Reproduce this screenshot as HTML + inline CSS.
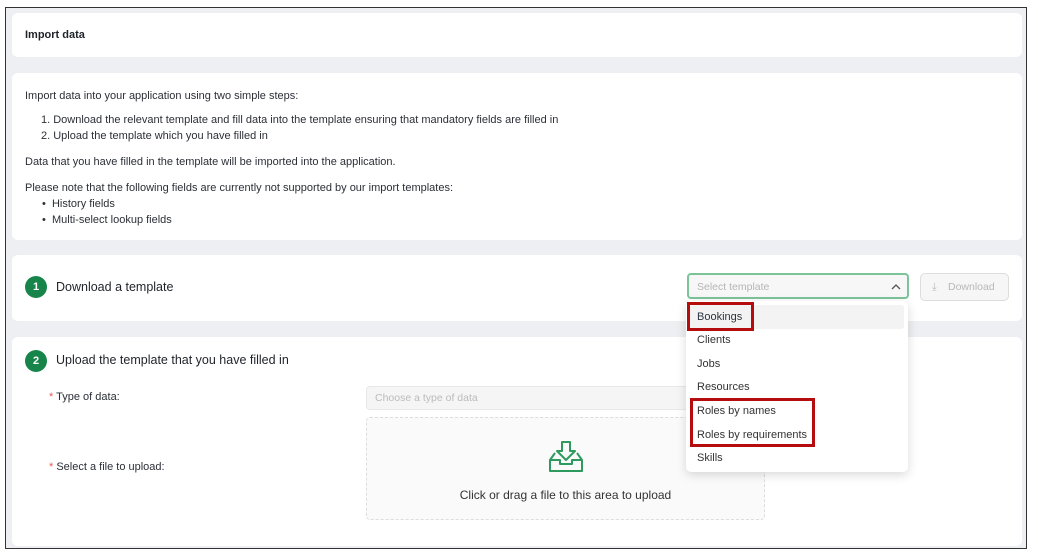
<!DOCTYPE html>
<html><head><style>
*{box-sizing:border-box;margin:0;padding:0}
body{width:1038px;height:556px;background:#fff;font-family:"Liberation Sans",sans-serif;color:#2b2f36;position:relative;overflow:hidden}
.frame{position:absolute;left:5px;top:7px;width:1022px;height:542px;border:1px solid #333;background:#eeeff2}
.card{position:absolute;left:6px;width:1010px;background:#fff;border-radius:6px}
.a{position:absolute;white-space:nowrap}
.s{font-size:11px}
.num{position:absolute;width:22px;height:22px;border-radius:50%;background:#17854a;color:#fff;font-size:11px;font-weight:bold;text-align:center;line-height:22px}
.h{font-size:12.5px;color:#1f2329}
.red{position:absolute;border:3px solid #b50d0d}
.opt{position:absolute;left:11px;font-size:11px;color:#333}
</style></head><body>
<div class="frame">
 <div class="card" style="top:5px;height:44px"><div class="a s" style="left:13px;top:16px;font-weight:bold;color:#1f2329">Import data</div></div>
 <div class="card" style="top:65px;height:167px">
  <div class="a s" style="left:13px;top:17px">Import data into your application using two simple steps:</div>
  <div class="a s" style="left:29px;top:41px">1. Download the relevant template and fill data into the template ensuring that mandatory fields are filled in</div>
  <div class="a s" style="left:29px;top:57px">2. Upload the template which you have filled in</div>
  <div class="a s" style="left:13px;top:83px">Data that you have filled in the template will be imported into the application.</div>
  <div class="a s" style="left:13px;top:109px">Please note that the following fields are currently not supported by our import templates:</div>
  <div class="a s" style="left:30px;top:125px">•&nbsp;&nbsp;History fields</div>
  <div class="a s" style="left:30px;top:141px">•&nbsp;&nbsp;Multi-select lookup fields</div>
 </div>
 <div class="card" style="top:247px;height:66px">
  <div class="num" style="left:13px;top:21px">1</div>
  <div class="a h" style="left:44px;top:25px">Download a template</div>
  <div class="a" style="left:675px;top:18px;width:222px;height:26px;border:2px solid #7cc39a;border-radius:4px;background:#f7f7f7"><span class="a" style="left:8px;top:6px;font-size:10.5px;color:#b5b5b5">Select template</span><svg class="a" style="right:6px;top:8px" width="10" height="8" viewBox="0 0 10 8"><path d="M1 6 L5 2 L9 6" fill="none" stroke="#555" stroke-width="1.3"/></svg></div>
  <div class="a" style="left:908px;top:18px;width:89px;height:28px;border:1px solid #ddd;border-radius:5px;background:#f6f6f6;font-size:10.5px;color:#b8b8b8"><span class="a" style="left:11px;top:7px">⤓</span><span class="a" style="left:27px;top:7px">Download</span></div>
 </div>
 <div class="card" style="top:329px;height:209px">
  <div class="num" style="left:13px;top:13px">2</div>
  <div class="a h" style="left:44px;top:16px">Upload the template that you have filled in</div>
  <div class="a s" style="left:37px;top:54px"><span style="color:#e55">*</span> Type of data:</div>
  <div class="a" style="left:354px;top:49px;width:340px;height:24px;background:#f5f5f5;border:1px solid #e8e8e8;border-radius:4px"><span class="a" style="left:8px;top:5px;font-size:10.5px;color:#bbb">Choose a type of data</span></div>
  <div class="a s" style="left:37px;top:124px"><span style="color:#e55">*</span> Select a file to upload:</div>
  <div class="a" style="left:354px;top:80px;width:399px;height:103px;background:#fafafa;border:1px dashed #ddd;border-radius:4px">
   <svg class="a" style="left:181px;top:22px" width="36" height="34" viewBox="0 0 36 34"><path d="M14 2h8v9h5l-9 9-9-9h5z" fill="none" stroke="#2e9a5e" stroke-width="2" stroke-linejoin="round"/><path d="M2 20v11h32V20l-5-7M7 13l-5 7h10v4h12v-4h10" fill="none" stroke="#2e9a5e" stroke-width="2" stroke-linejoin="round"/></svg>
   <div class="a" style="left:0;width:397px;text-align:center;top:70px;font-size:12px;color:#333">Click or drag a file to this area to upload</div>
  </div>
 </div>
</div>
<div class="a" style="left:686px;top:301px;width:222px;height:171px;background:#fff;border-radius:5px;box-shadow:0 3px 10px rgba(0,0,0,.15)">
 <div class="a" style="left:4px;top:4px;width:214px;height:24px;background:#f3f3f3;border-radius:3px"></div>
 <div class="opt" style="top:10px;color:#2d3440">Bookings</div>
 <div class="opt" style="top:33px">Clients</div>
 <div class="opt" style="top:57px">Jobs</div>
 <div class="opt" style="top:80px">Resources</div>
 <div class="opt" style="top:104px">Roles by names</div>
 <div class="opt" style="top:128px">Roles by requirements</div>
 <div class="opt" style="top:151px">Skills</div>
</div>
<div class="red" style="left:687px;top:302px;width:67px;height:29px"></div>
<div class="red" style="left:690px;top:398px;width:125px;height:49px"></div>
</body></html>
